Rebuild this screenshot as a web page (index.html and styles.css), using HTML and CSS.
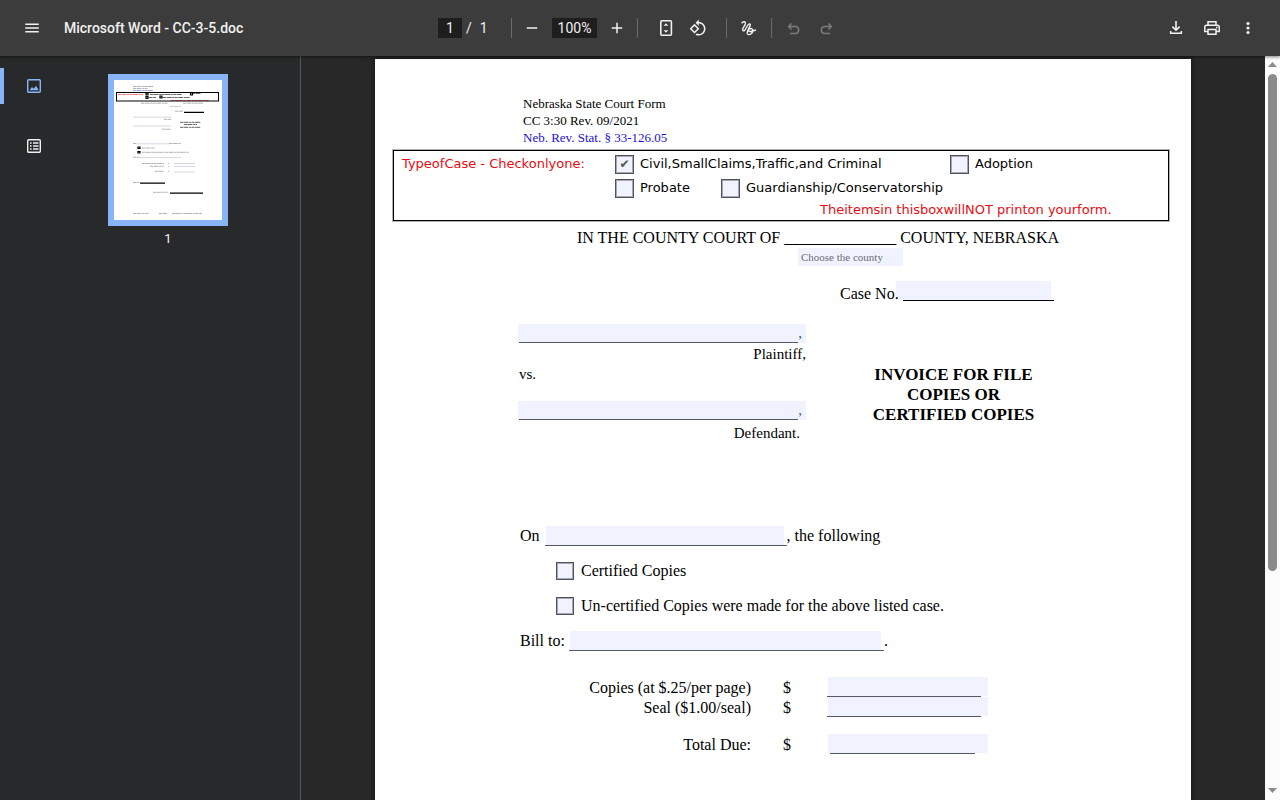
FILE: index.html
```html
<!DOCTYPE html>
<html lang="en">
<head>
<meta charset="utf-8">
<title>Microsoft Word - CC-3-5.doc</title>
<link rel="stylesheet" href="styles.css">
</head>
<body>
<header class="toolbar">
  <div class="start">
    <button class="icon-btn" aria-label="Menu"><svg width="18" height="18" viewBox="0 0 24 24"><path d="M3 18h18v-2H3v2zm0-5h18v-2H3v2zm0-7v2h18V6H3z"/></svg></button>
    <h1 class="title">Microsoft Word - CC-3-5.doc</h1>
  </div>
  <div class="controls">
    <div class="pager"><input class="dark-field page-field" aria-label="Page number" value="1"><span class="slash">/</span><span>1</span></div>
    <span class="divider after-pager"></span>
    <button class="icon-btn" aria-label="Zoom out"><svg width="18" height="18" viewBox="0 0 24 24"><path d="M5 11h14v2H5z"/></svg></button>
    <input class="dark-field zoom-field" aria-label="Zoom level" value="100%">
    <button class="icon-btn" aria-label="Zoom in"><svg width="18" height="18" viewBox="0 0 24 24"><path d="M19 13h-6v6h-2v-6H5v-2h6V5h2v6h6z"/></svg></button>
    <span class="divider after-zoom"></span>
    <button class="icon-btn" aria-label="Fit to page"><svg width="20" height="20" viewBox="0 0 20 20"><rect x="4.8" y="2.8" width="10.6" height="14.4" rx="1" fill="none" stroke="currentColor" stroke-width="1.6"/><path d="M10 5.2l2.4 2.6H7.6zM10 14.8l2.4-2.6H7.6z"/></svg></button>
    <button class="icon-btn" aria-label="Rotate counterclockwise"><svg width="18" height="18" viewBox="0 0 24 24"><path d="M7.34 6.41L.86 12.9l6.49 6.48 6.49-6.48-6.5-6.49zM3.69 12.9l3.66-3.66L11 12.9l-3.66 3.66-3.65-3.66zm15.67-6.26C17.61 4.88 15.3 4 13 4V.76L8.76 5 13 9.24V6c1.79 0 3.58.68 4.95 2.05 2.73 2.73 2.73 7.17 0 9.9C16.58 19.32 14.79 20 13 20c-.97 0-1.94-.21-2.84-.61l-1.49 1.49C10.02 21.62 11.51 22 13 22c2.3 0 4.61-.88 6.36-2.64 3.52-3.51 3.52-9.21 0-12.72z"/></svg></button>
    <span class="divider after-view"></span>
    <button class="icon-btn" aria-label="Draw"><svg width="20" height="20" viewBox="0 0 20 20"><path d="M3.600 5.200C5.200 3.200 8 3.200 7.300 6 6.600 8.300 3.400 11 5 12.600 7.500 14.600 9 5.600 11.600 5.900 14.400 6.400 8 13 9.400 15.800 11.200 18.200 15.800 14.800 14.500 11.500 13 9 9.400 11.600 11 13.400 12.800 14.400 14.500 12 18 12.200" fill="none" stroke="currentColor" stroke-width="1.400"/></svg></button>
    <span class="divider after-draw"></span>
    <button class="icon-btn" aria-label="Undo" disabled><svg width="20" height="20" viewBox="0 0 20 20" fill="none" stroke="currentColor" stroke-width="1.5"><path d="M7.5 5.500L4.600 8.500l2.900 3M4.800 8.500h7.400a3.700 3.700 0 0 1 0 7H6"/></svg></button>
    <button class="icon-btn" aria-label="Redo" disabled><svg width="20" height="20" viewBox="0 0 20 20" fill="none" stroke="currentColor" stroke-width="1.5"><path d="M12.500 5.500l2.900 3-2.900 3M15.200 8.500H7.800a3.700 3.700 0 0 0 0 7H14"/></svg></button>
  </div>
  <div class="end">
    <button class="icon-btn" aria-label="Download"><svg width="20" height="20" viewBox="0 0 20 20" fill="none" stroke="currentColor" stroke-width="1.6"><path d="M10 3v9M6.4 8.6L10 12.2l3.600-3.600M4.700 13v2.300h10.600V13"/></svg></button>
    <button class="icon-btn" aria-label="Print"><svg width="20" height="20" viewBox="0 0 20 20" fill="none" stroke="currentColor" stroke-width="1.500"><path d="M6 7V3.700h8V7M6 13.500H2.800V9q0-1.800 1.800-1.800h10.800q1.800 0 1.800 1.800v4.500H14M6 11.500h8v4.800H6z"/><path d="M14 9.500h1.500"/></svg></button>
    <button class="icon-btn" aria-label="More actions"><svg width="20" height="20" viewBox="0 0 20 20"><circle cx="10" cy="5.500" r="1.600"/><circle cx="10" cy="10" r="1.600"/><circle cx="10" cy="14.500" r="1.600"/></svg></button>
  </div>
</header>
<div class="viewer">
  <aside class="sidebar">
    <nav class="tabs">
      <button class="tab active" aria-label="Thumbnails"><svg width="16" height="16" viewBox="0 0 16 16"><rect x="1.700" y="1.700" width="12.600" height="12.600" rx="1" fill="none" stroke="currentColor" stroke-width="1.400"/><path d="M3.500 12.300l2.500-3.300 1.700 1.800 2.300-3 2.700 4.500z"/></svg></button>
      <button class="tab" aria-label="Document outline"><svg width="16" height="16" viewBox="0 0 16 16"><rect x="1.700" y="1.700" width="12.600" height="12.600" rx="1" fill="none" stroke="currentColor" stroke-width="1.400"/><path d="M4 4.200h1.600v1.600H4zM7 4.300h5.500v1.400H7zM4 7.200h1.600v1.600H4zM7 7.300h5.500v1.400H7zM4 10.200h1.600v1.600H4zM7 10.300h5.500v1.400H7z"/></svg></button>
    </nav>
    <div class="thumbs">
      <button class="thumb" aria-label="Page 1">
        <svg width="108" height="140" viewBox="0 0 108 140" fill="none">
          <g stroke="#aaa" stroke-width=".9" stroke-dasharray="3 .5 5 .7 2 .4">
            <path d="M19 6.500h20M19 8.500h15"/><path d="M27 23.200h27M69 23.200h20M61 31.200h8M50 39.400h7M48 49.200h9M19 63.500h3M55 63.500h12M28 68h13M28 72.300h47M19 77.300h6M28 83.500h22M36 86.300h14M41 91.300h9M54 83.500h1M54 86.300h1M54 91.300h1M19 102.500h6M39 112.300h15M19 133.500h16M45 133.500h8M58 133.500h30"/>
            <path stroke="#555" d="M36 14.500h32M35 17.500h7M49 17.500h27M78 13.500h9M66 42.300h21M70 44.500h13M66 47.300h21"/>
          </g>
          <g stroke-width=".8" stroke-dasharray="3 .5 5 .7 2 .4"><path stroke="#88d" d="M19 10.500h20"/><path stroke="#bbd" d="M56 26.500h11"/><path stroke="#e55" d="M4 14.500h25M57 20.500h38"/></g>
          <path d="M19 37.200h38M19 46h38M22 63.800h34M25 77.500h42M60 83.500h21M60 86.500h21M60 92h21" stroke="#ccd" stroke-width=".8"/>
          <rect x="2.500" y="12.500" width="102" height="8.500" stroke="#000"/>
          <path d="M70 32.300h20M26 103.200h25M56 113.200h33" stroke="#000" stroke-width="1.200"/>
          <g stroke="#000" stroke-width="1.200"><path d="M32 13h2v2h-2zM32 16.500h2v2h-2zM46 16h2v2h-2zM76.500 13h2v2h-2zM24 67h2v1.500h-2zM24 71.500h2v1.500h-2z"/></g>
        </svg>
      </button>
      <span class="thumb-label">1</span>
    </div>
  </aside>
  <main class="stage">
    <form class="page">
      <div class="form-id">Nebraska State Court Form<br>CC 3:30 Rev. 09/2021<br><a href="#">Neb. Rev. Stat. § 33-126.05</a></div>
      <div class="case-type">
        <div class="case-title">TypeofCase - Checkonlyone:</div>
        <div class="case-options">
          <div class="option-row">
            <label class="option civil"><input type="checkbox" class="tick" checked>Civil,SmallClaims,Traffic,and Criminal</label>
            <label class="option"><input type="checkbox" class="tick">Adoption</label>
          </div>
          <div class="option-row">
            <label class="option probate"><input type="checkbox" class="tick">Probate</label>
            <label class="option"><input type="checkbox" class="tick">Guardianship/Conservatorship</label>
          </div>
          <div class="notice">Theitemsin thisboxwillNOT printon yourform.</div>
        </div>
      </div>
      <div class="court">IN THE COUNTY COURT OF ______________ COUNTY, NEBRASKA</div>
      <select class="county" aria-label="County"><option>Choose the county</option></select>
      <div class="case-no"><label for="caseno">Case No.</label><span class="fill fill-case"><input id="caseno"></span></div>
      <div class="caption">
        <div class="parties">
          <span class="fill fill-party"><input id="plaintiff"><i>,</i></span>
          <label class="party" for="plaintiff">Plaintiff,</label>
          <div class="versus">vs.</div>
          <span class="fill fill-party"><input id="defendant"><i>,</i></span>
          <label class="party defendant" for="defendant">Defendant.</label>
        </div>
        <h2 class="form-title">INVOICE FOR FILE<br>COPIES OR<br>CERTIFIED COPIES</h2>
      </div>
      <div class="line"><label for="date">On</label><span class="fill fill-date"><input id="date"></span><span>, the following</span></div>
      <label class="line copies"><input type="checkbox" class="tick small">Certified Copies</label>
      <label class="line copies"><input type="checkbox" class="tick small">Un-certified Copies were made for the above listed case.</label>
      <div class="line"><label for="bill">Bill to:</label><span class="fill fill-bill"><input id="bill"></span><span>.</span></div>
      <div class="amounts">
        <label for="copies">Copies (at $.25/per page)</label><span>$</span><span class="fill fill-amount"><input id="copies"></span>
        <label for="seal">Seal ($1.00/seal)</label><span>$</span><span class="fill fill-amount"><input id="seal"></span>
        <label class="total" for="total">Total Due:</label><span class="total">$</span><span class="fill fill-amount fill-total total"><input id="total"></span>
      </div>
    </form>
  </main>
  <div class="scrollbar" aria-hidden="true">
    <svg width="9" height="5" viewBox="0 0 9 5"><path d="M4.500 0L9 5H0z"/></svg>
    <div class="thumb-bar"></div>
    <svg class="down" width="9" height="5" viewBox="0 0 9 5"><path d="M0 0h9L4.500 5z"/></svg>
  </div>
</div>
</body>
</html>
```
FILE: styles.css
```css
* { box-sizing: border-box; }
body {
  margin: 0;
  height: 100vh;
  display: flex;
  flex-direction: column;
  overflow: hidden;
  background: #282828;
  font-family: Roboto, sans-serif;
}
button { border: 0; padding: 0; background: none; color: inherit; font: inherit; }
svg { display: block; }

/* Toolbar */
.toolbar {
  position: relative;
  z-index: 1;
  flex: none;
  display: grid;
  grid-template-columns: 1fr auto 1fr;
  align-items: center;
  height: 56px;
  padding: 0 16px;
  background: #3c3c3c;
  color: #f1f1f1;
  font-size: 14px;
  box-shadow: 0 1px 3px rgba(0, 0, 0, .5);
}
.toolbar svg:not([fill]) { fill: currentColor; }
.start, .controls, .end { display: flex; align-items: center; }
.start { gap: 16px; }
.end { gap: 4px; justify-content: flex-end; }
.title { margin: 0; font-size: 14px; font-weight: 500; white-space: nowrap; }
.icon-btn { display: grid; place-items: center; width: 32px; height: 32px; }
.icon-btn:disabled { color: #7b7b7b; }
.pager { display: flex; align-items: center; width: 73px; }
.slash { margin: 0 8px 0 4px; }
.dark-field {
  height: 20px;
  padding: 0;
  border: 0;
  background: #1e1e1e;
  color: #f1f1f1;
  font: 14px Roboto, sans-serif;
  text-align: center;
}
.page-field { width: 24px; }
.zoom-field { width: 45px; margin: 0 4px; }
.divider { width: 1px; height: 20px; background: #6b6b6b; }
.after-pager { margin-right: 4px; }
.after-zoom { margin: 0 12px 0 4px; }
.after-view { margin: 0 5px 0 12px; }
.after-draw { margin: 0 6px 0 7px; }

/* Sidebar */
.viewer { flex: 1; min-height: 0; display: flex; }
.sidebar {
  flex: none;
  display: flex;
  width: 301px;
  border-right: 1px solid #55575a;
  background: #28292a;
  color: #f1f1f1;
}
.tabs { display: flex; flex-direction: column; gap: 24px; width: 68px; padding-top: 12px; }
.tab { display: grid; place-items: center; height: 36px; border-left: 4px solid transparent; padding-right: 4px; }
.tab svg { fill: currentColor; }
.tab.active { color: #8ab4f8; background: linear-gradient(#8ab4f8, #8ab4f8) 0 0 / 4px 100% no-repeat border-box; border-radius: 0 4px 4px 0; }
.thumbs { display: flex; flex-direction: column; align-items: center; width: 200px; padding-top: 18px; }
.thumb { border: 6px solid #8ab4f8; background: #fff; }
.thumb-label { margin-top: 5px; font-size: 13px; line-height: 16px; }

/* Page */
.stage { flex: 1; min-width: 0; overflow: hidden; padding-top: 3px; }
.page {
  max-width: 816px;
  min-height: 1056px;
  margin: 0 auto;
  padding: 36px 18px 0;
  background: #fff;
  color: #000;
  box-shadow: 0 0 6px #111;
  font: 16px/20px "Liberation Serif", serif;
}
.form-id { padding-left: 130px; font-size: 13px; line-height: 17px; }
.form-id a { color: #1c10d8; text-decoration: none; }
.case-type {
  display: flex;
  margin: 4px 4px 0 0;
  padding: 1px 0 0 8px;
  border: 1px solid #000;
  outline: 1px solid rgba(0, 0, 0, .3);
  font: 13px/24px "DejaVu Sans", sans-serif;
  white-space: nowrap;
}
.case-title { width: 213px; color: #e80c12; }
.option-row { display: flex; }
.option { display: flex; align-items: center; gap: 6px; height: 24px; }
.civil { width: 335px; }
.probate { width: 106px; }
.notice { padding-left: 205px; color: #e80c12; line-height: 20px; }
.tick {
  appearance: none;
  display: grid;
  place-items: center;
  flex: none;
  width: 19px;
  height: 19px;
  margin: 0;
  border: 1px solid #50525c;
  box-shadow: inset 0 0 0 1px #a5a8b5;
  background: #f0f3ff;
}
.tick:checked::after { content: "✔"; color: #555; font: 12px/12px "DejaVu Sans", sans-serif; }
.tick.small { width: 18px; height: 18px; }
.court { margin-top: 8px; padding-left: 184px; line-height: 18px; white-space: nowrap; }
.county {
  display: block;
  appearance: none;
  width: 105px;
  height: 18px;
  margin: 1px 0 0 405px;
  padding: 0 3px;
  border: 0;
  background: #f0f3ff;
  color: #6a6c74;
  font: 11px "Liberation Serif", serif;
}
.case-no { display: flex; align-items: flex-end; margin-top: 15px; padding-left: 447px; line-height: 14px; }
.case-no label { z-index: 1; width: 56px; white-space: nowrap; }

/* Shaded entry area with a rule that runs on its lower edge */
.fill { position: relative; display: block; height: 20px; }
.fill input { display: block; width: 100%; height: 19px; padding: 0 2px; border: 0; background: #f0f3ff; font: inherit; }
.fill::after { content: ""; position: absolute; bottom: 0; left: -1px; right: -3px; height: 1px; background: #555866; }
.fill-case { width: 155px; }
.fill-case::after { left: 7px; background: #000; }
.fill-party { width: 288px; font-size: 15px; }
.fill-party::after { left: 1px; right: 8px; bottom: 1px; }
.fill-party i { position: absolute; right: 4px; bottom: 1px; color: #555866; font-style: normal; line-height: 20px; }
.fill-date { width: 238px; margin: 0 3px 0 6px; }
.fill-bill { width: 311px; margin: 0 3px 0 5px; }
.fill-amount { width: 160px; }
.fill-amount::after { right: 7px; }
.fill-total::after { left: 2px; right: 13px; }

.caption { display: flex; margin-top: 23px; padding-left: 125px; }
.parties { display: flex; flex-direction: column; width: 288px; font-size: 15px; }
.party { text-align: right; }
.versus { margin-bottom: 17px; padding-left: 1px; }
.defendant { margin-top: 2px; padding-right: 6px; }
.form-title { width: 295px; margin: 41px 0 0; font-size: 17px; line-height: 20px; text-align: center; }
.line { display: flex; align-items: center; margin-top: 15px; padding-left: 127px; }
.caption + .line { margin-top: 83px; }
.copies { gap: 7px; padding-left: 163px; }
.amounts {
  display: grid;
  grid-template-columns: 231px 8px 160px;
  column-gap: 32px;
  margin: 26px 0 0 127px;
  line-height: 22px;
}
.amounts label, .amounts span { height: 20px; }
.amounts label { text-align: right; }
.amounts .fill { margin-left: 5px; }
.amounts .total { margin-top: 17px; }

/* Scrollbar */
.scrollbar {
  flex: none;
  display: flex;
  flex-direction: column;
  align-items: center;
  width: 15px;
  padding: 6px 0 7px;
  background: #fcfcfc;
}
.scrollbar svg { flex: none; fill: #8b8b8b; }
.thumb-bar { width: 9px; height: 68%; margin-top: 7px; border-radius: 5px; background: #8b8b8b; }
.down { margin-top: auto; }
```
